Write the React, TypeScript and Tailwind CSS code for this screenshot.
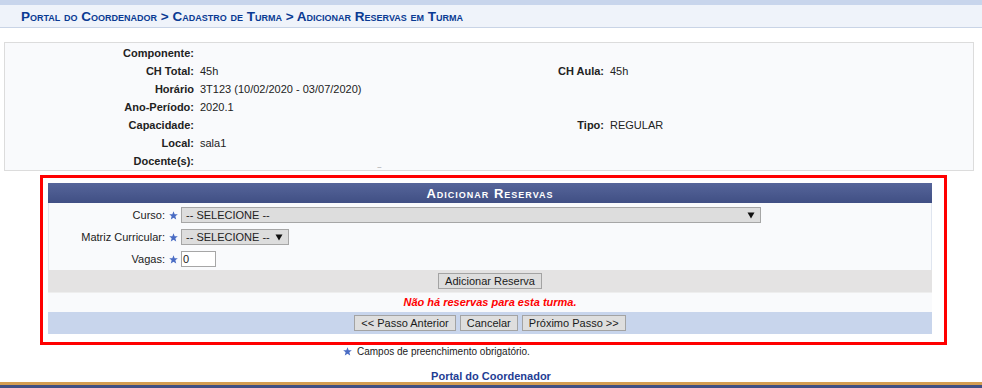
import React from "react";

const Star = () => (
  <svg width="9" height="9" viewBox="0 0 10 10" className="shrink-0">
    <polygon
      points="5,0.3 6.3,3.6 9.8,3.7 7.1,5.9 8,9.5 5,7.5 2,9.5 2.9,5.9 0.2,3.7 3.7,3.6"
      fill="#4a6cc4"
    />
  </svg>
);

const Arrow = () => (
  <svg width="8" height="7" viewBox="0 0 8 7" className="shrink-0">
    <polygon points="0.5,0.5 7.5,0.5 4,6.5" fill="#111" />
  </svg>
);

const InfoRow = ({ l1, v1, l2, v2 }: { l1: string; v1?: string; l2?: string; v2?: string }) => (
  <div className="grid h-[18px] grid-cols-[189px_310px_100px_1fr] items-center">
    <div className="text-right font-bold">{l1}</div>
    <div className="pl-[6px]">{v1}</div>
    <div className="text-right font-bold">{l2}</div>
    <div className="pl-[6px]">{v2}</div>
  </div>
);

const Btn = ({ children }: { children: React.ReactNode }) => (
  <div className="flex h-[16px] items-center border border-[#a3a3a3] bg-[#dedede] px-[6px] text-[11px] leading-none text-[#1a1a1a]">
    {children}
  </div>
);

const FormRow = ({ label, children }: { label: string; children: React.ReactNode }) => (
  <div className="flex h-[22px] items-center">
    <div className="w-[116px] text-right">{label}</div>
    <div className="ml-[4px] mr-[3px] flex items-center">
      <Star />
    </div>
    {children}
  </div>
);

export default function App() {
  return (
    <div
      className="w-[982px] bg-white text-[11px] leading-[13px] text-[#222]"
      style={{ fontFamily: '"Liberation Sans", Arial, sans-serif' }}
    >
      <div className="h-[5px] bg-[#c8d5ec]" />
      <div className="flex h-[23px] items-center border-b border-[#c9d4e6] bg-[#eff3fa] pl-[21px]">
        <span className="text-[13.5px] font-bold text-[#0a3a93] [font-variant:small-caps]">
          Portal do Coordenador &gt; Cadastro de Turma &gt; Adicionar Reservas em Turma
        </span>
      </div>

      <div className="ml-[4px] mt-[14px] w-[970px] border border-[#dcdcdc] bg-[#f9fafc] pt-[1px]">
        <InfoRow l1="Componente:" />
        <InfoRow l1="CH Total:" v1="45h" l2="CH Aula:" v2="45h" />
        <InfoRow l1="Horário" v1="3T123 (10/02/2020 - 03/07/2020)" />
        <InfoRow l1="Ano-Período:" v1="2020.1" />
        <InfoRow l1="Capacidade:" l2="Tipo:" v2="REGULAR" />
        <InfoRow l1="Local:" v1="sala1" />
        <div className="relative">
          <InfoRow l1="Docente(s):" />
          <span className="absolute bottom-[-4px] left-[372px] text-[8px] text-[#999]">~</span>
        </div>
      </div>

      <div className="ml-[40px] mt-[4px] w-[907px] border-[3px] border-[#ff0000] pb-[8px] pl-[5px] pr-[10px] pt-[5px]">
        <div className="w-[884px]">
          <div className="flex h-[20px] items-center justify-center bg-[linear-gradient(#56659a,#404f84)] text-[13px] font-bold tracking-[1px] text-white [font-variant:small-caps]">
            Adicionar Reservas
          </div>
          <div className="border-x border-[#dfe5ef] bg-[#f9fafc] pt-[1px]">
            <FormRow label="Curso:">
              <div className="flex h-[16px] w-[580px] items-center justify-between border border-[#a6a6a6] bg-[#dddddd] pl-[4px] pr-[5px]">
                <span>-- SELECIONE --</span>
                <Arrow />
              </div>
            </FormRow>
            <FormRow label="Matriz Curricular:">
              <div className="flex h-[16px] w-[108px] items-center justify-between border border-[#a6a6a6] bg-[#dddddd] pl-[4px] pr-[5px]">
                <span>-- SELECIONE --</span>
                <Arrow />
              </div>
            </FormRow>
            <FormRow label="Vagas:">
              <div className="flex h-[16px] w-[35px] items-center border border-[#a6a6a6] bg-white pl-[1px]">
                0
              </div>
            </FormRow>
          </div>
          <div className="flex h-[23px] items-center justify-center border-b border-[#eeeeee] bg-[#e4e3e3]">
            <Btn>Adicionar Reserva</Btn>
          </div>
          <div className="flex h-[19px] items-center justify-center bg-[#f9fafc] font-bold italic text-[#ff0000]">
            Não há reservas para esta turma.
          </div>
          <div className="flex h-[22px] items-center justify-center gap-[4px] bg-[#c8d5ec]">
            <Btn>&lt;&lt; Passo Anterior</Btn>
            <Btn>Cancelar</Btn>
            <Btn>Próximo Passo &gt;&gt;</Btn>
          </div>
        </div>
      </div>

      <div className="flex h-[13px] items-center pl-[343px]">
        <Star />
        <span className="ml-[5px] text-[10px]">Campos de preenchimento obrigatório.</span>
      </div>

      <div className="mt-[12px] h-[12px] text-center font-bold leading-[12px] text-[#1f3d94]">
        Portal do Coordenador
      </div>
      <div className="h-[3px] bg-[#d49d52]" />
      <div className="h-[6px] bg-[#404f83]" />
    </div>
  );
}
